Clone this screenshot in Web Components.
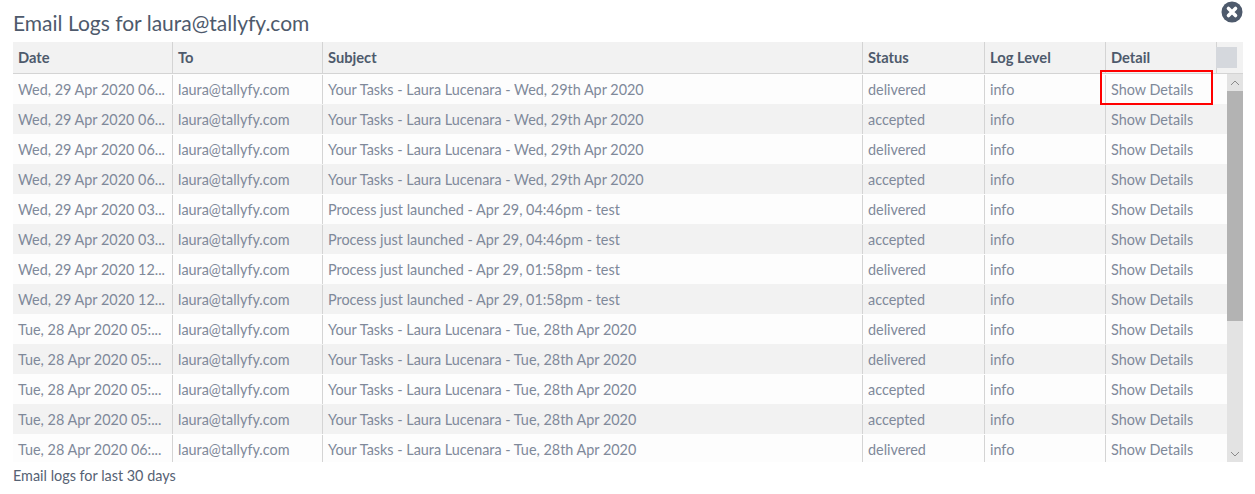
<!DOCTYPE html>
<html><head><meta charset="utf-8"><style>
html,body{margin:0;padding:0;background:#fff}
body{font-family:Lato,"Open Sans",sans-serif;width:1255px;height:494px;overflow:hidden}
</style></head><body>
<log-dialog title-text="Email Logs for laura@tallyfy.com" footer="Email logs for last 30 days"></log-dialog>
<script>
const ROWS=[
['Wed, 29 Apr 2020 06...','Your Tasks - Laura Lucenara - Wed, 29th Apr 2020','delivered'],
['Wed, 29 Apr 2020 06...','Your Tasks - Laura Lucenara - Wed, 29th Apr 2020','accepted'],
['Wed, 29 Apr 2020 06...','Your Tasks - Laura Lucenara - Wed, 29th Apr 2020','delivered'],
['Wed, 29 Apr 2020 06...','Your Tasks - Laura Lucenara - Wed, 29th Apr 2020','accepted'],
['Wed, 29 Apr 2020 03...','Process just launched - Apr 29, 04:46pm - test','delivered'],
['Wed, 29 Apr 2020 03...','Process just launched - Apr 29, 04:46pm - test','accepted'],
['Wed, 29 Apr 2020 12...','Process just launched - Apr 29, 01:58pm - test','delivered'],
['Wed, 29 Apr 2020 12...','Process just launched - Apr 29, 01:58pm - test','accepted'],
['Tue, 28 Apr 2020 05:...','Your Tasks - Laura Lucenara - Tue, 28th Apr 2020','delivered'],
['Tue, 28 Apr 2020 05:...','Your Tasks - Laura Lucenara - Tue, 28th Apr 2020','delivered'],
['Tue, 28 Apr 2020 05:...','Your Tasks - Laura Lucenara - Tue, 28th Apr 2020','accepted'],
['Tue, 28 Apr 2020 05:...','Your Tasks - Laura Lucenara - Tue, 28th Apr 2020','accepted'],
['Tue, 28 Apr 2020 06:...','Your Tasks - Laura Lucenara - Tue, 28th Apr 2020','delivered']];

class LogRow extends HTMLElement{
  constructor(){super();this.attachShadow({mode:'open'});}
  connectedCallback(){
    const c=JSON.parse(this.getAttribute('cells'));
    this.shadowRoot.innerHTML=`<style>
      :host{display:grid;grid-template-columns:160px 150px 540px 122px 121px 1fr;height:30px;background:#fdfdfd;color:#7f899a;font-size:14.4px}
      :host([alt]){background:#f2f2f2}
      span{padding-left:5px;border-right:1px solid #d4d4d4;white-space:nowrap;overflow:hidden;margin-top:1px;height:29px;line-height:29px}
      span:last-child{border-right:0}
    </style>`+c.map(t=>`<span>${t}</span>`).join('');
  }
}
class LogHeader extends HTMLElement{
  constructor(){super();this.attachShadow({mode:'open'});
    this.shadowRoot.innerHTML=`<style>
      :host{display:grid;grid-template-columns:160px 150px 540px 122px 121px 111px 21px 1fr;height:31px;background:#f2f2f2;border-bottom:1px solid #d4d4d4;color:#4e5a6c;font-size:14.7px;font-weight:700;line-height:30px}
      span{padding-left:5px;border-right:1px solid #d4d4d4;white-space:nowrap}
      i{display:block;width:21px;height:21px;background:#d5d8dd;margin:5px 0 0 -1px;position:relative}
    </style><span>Date</span><span>To</span><span>Subject</span><span>Status</span><span>Log Level</span><span>Detail</span><i></i><b></b>`;
  }
}
class LogScrollbar extends HTMLElement{
  constructor(){super();this.attachShadow({mode:'open'});
    this.shadowRoot.innerHTML=`<style>
      :host{display:flex;flex-direction:column;width:16px;background:#e3e3e3}
      .b{height:17px;display:flex;align-items:center;justify-content:center}
      .d{margin-top:auto}
      .t{height:230px;background:#b3b3b3}
      svg{display:block}
    </style><div class="b"><svg width="10" height="6" viewBox="0 0 10 6"><path d="M1 5 5 1l4 4" fill="none" stroke="#8a8a8a"/></svg></div><div class="t"></div><div class="d b"><svg width="10" height="6" viewBox="0 0 10 6"><path d="M1 1l4 4 4-4" fill="none" stroke="#8a8a8a"/></svg></div>`;
  }
}
class LogDialog extends HTMLElement{
  constructor(){super();this.attachShadow({mode:'open'});}
  connectedCallback(){
    this.shadowRoot.innerHTML=`<style>
      :host{display:flex;flex-direction:column;position:relative;height:494px;box-sizing:border-box;padding:0 12px 0 13px;color:#4e5a6c}
      h1{margin:0;height:42px;font-size:21px;font-weight:400;line-height:45px;color:#4e5a6c;white-space:nowrap}
      .close{position:absolute;left:1221px;top:1px;width:22px;height:22px}
      .body{display:flex;height:388px}
      .rows{flex:1;min-width:0;height:388px;overflow:hidden}
      .wrap{position:relative}
      .mark{position:absolute;left:1087px;top:28px;width:109px;height:31px;border:2px solid #f00}
      footer{font-size:14.4px;line-height:20px;margin-top:4px;color:#566274}
    </style>
    <h1>${this.getAttribute('title-text')}</h1>
    <svg class="close" viewBox="0 0 22 22"><circle cx="11" cy="11" r="10.5" fill="#4e5a6c"/><path d="M7.5 7.5l7 7M14.5 7.5l-7 7" stroke="#fff" stroke-width="3.6" stroke-linecap="round"/></svg>
    <div class="wrap"><log-header></log-header>
      <div class="body"><div class="rows" id="r"></div><log-scrollbar></log-scrollbar></div>
      <div class="mark"></div></div>
    <footer>${this.getAttribute('footer')}</footer>`;
    const r=this.shadowRoot.getElementById('r');
    ROWS.forEach((x,i)=>{const e=document.createElement('log-row');
      e.setAttribute('cells',JSON.stringify([x[0],'laura@tallyfy.com',x[1],x[2],'info','Show Details']));
      if(i%2)e.setAttribute('alt','');r.appendChild(e);});
  }
}
customElements.define('log-row',LogRow);
customElements.define('log-header',LogHeader);
customElements.define('log-scrollbar',LogScrollbar);
customElements.define('log-dialog',LogDialog);
</script></body></html>
